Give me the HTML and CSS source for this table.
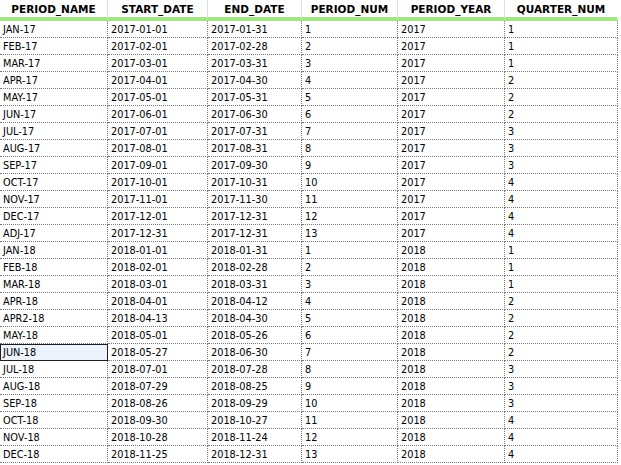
FILE: index.html
```html
<!DOCTYPE html>
<html>
<head>
<meta charset="utf-8">
<link rel="stylesheet" href="styles.css">
</head>
<body>
<table class="grid">
  <colgroup>
    <col class="c1"><col class="c2"><col class="c3"><col class="c4"><col class="c5"><col class="c6">
  </colgroup>
  <thead>
    <tr>
      <th>PERIOD_NAME</th><th>START_DATE</th><th>END_DATE</th><th>PERIOD_NUM</th><th>PERIOD_YEAR</th><th>QUARTER_NUM</th>
    </tr>
  </thead>
  <tbody>
    <tr><td>JAN-17</td><td>2017-01-01</td><td>2017-01-31</td><td>1</td><td>2017</td><td>1</td></tr>
    <tr><td>FEB-17</td><td>2017-02-01</td><td>2017-02-28</td><td>2</td><td>2017</td><td>1</td></tr>
    <tr><td>MAR-17</td><td>2017-03-01</td><td>2017-03-31</td><td>3</td><td>2017</td><td>1</td></tr>
    <tr><td>APR-17</td><td>2017-04-01</td><td>2017-04-30</td><td>4</td><td>2017</td><td>2</td></tr>
    <tr><td>MAY-17</td><td>2017-05-01</td><td>2017-05-31</td><td>5</td><td>2017</td><td>2</td></tr>
    <tr><td>JUN-17</td><td>2017-06-01</td><td>2017-06-30</td><td>6</td><td>2017</td><td>2</td></tr>
    <tr><td>JUL-17</td><td>2017-07-01</td><td>2017-07-31</td><td>7</td><td>2017</td><td>3</td></tr>
    <tr><td>AUG-17</td><td>2017-08-01</td><td>2017-08-31</td><td>8</td><td>2017</td><td>3</td></tr>
    <tr><td>SEP-17</td><td>2017-09-01</td><td>2017-09-30</td><td>9</td><td>2017</td><td>3</td></tr>
    <tr><td>OCT-17</td><td>2017-10-01</td><td>2017-10-31</td><td>10</td><td>2017</td><td>4</td></tr>
    <tr><td>NOV-17</td><td>2017-11-01</td><td>2017-11-30</td><td>11</td><td>2017</td><td>4</td></tr>
    <tr><td>DEC-17</td><td>2017-12-01</td><td>2017-12-31</td><td>12</td><td>2017</td><td>4</td></tr>
    <tr><td>ADJ-17</td><td>2017-12-31</td><td>2017-12-31</td><td>13</td><td>2017</td><td>4</td></tr>
    <tr><td>JAN-18</td><td>2018-01-01</td><td>2018-01-31</td><td>1</td><td>2018</td><td>1</td></tr>
    <tr><td>FEB-18</td><td>2018-02-01</td><td>2018-02-28</td><td>2</td><td>2018</td><td>1</td></tr>
    <tr><td>MAR-18</td><td>2018-03-01</td><td>2018-03-31</td><td>3</td><td>2018</td><td>1</td></tr>
    <tr><td>APR-18</td><td>2018-04-01</td><td>2018-04-12</td><td>4</td><td>2018</td><td>2</td></tr>
    <tr><td>APR2-18</td><td>2018-04-13</td><td>2018-04-30</td><td>5</td><td>2018</td><td>2</td></tr>
    <tr><td>MAY-18</td><td>2018-05-01</td><td>2018-05-26</td><td>6</td><td>2018</td><td>2</td></tr>
    <tr><td class="selected">JUN-18</td><td>2018-05-27</td><td>2018-06-30</td><td>7</td><td>2018</td><td>2</td></tr>
    <tr><td>JUL-18</td><td>2018-07-01</td><td>2018-07-28</td><td>8</td><td>2018</td><td>3</td></tr>
    <tr><td>AUG-18</td><td>2018-07-29</td><td>2018-08-25</td><td>9</td><td>2018</td><td>3</td></tr>
    <tr><td>SEP-18</td><td>2018-08-26</td><td>2018-09-29</td><td>10</td><td>2018</td><td>3</td></tr>
    <tr><td>OCT-18</td><td>2018-09-30</td><td>2018-10-27</td><td>11</td><td>2018</td><td>4</td></tr>
    <tr><td>NOV-18</td><td>2018-10-28</td><td>2018-11-24</td><td>12</td><td>2018</td><td>4</td></tr>
    <tr><td>DEC-18</td><td>2018-11-25</td><td>2018-12-31</td><td>13</td><td>2018</td><td>4</td></tr>
  </tbody>
</table>
</body>
</html>
```

FILE: styles.css
```css
html, body {
  margin: 0;
  padding: 0;
  background: #ffffff;
}

.grid {
  border-collapse: separate;
  border-spacing: 0;
  table-layout: fixed;
  width: 618px;
  font-family: "DejaVu Sans", Verdana, sans-serif;
  color: #000000;
}

.c1 { width: 108px; }
.c2 { width: 100px; }
.c3 { width: 94px; }
.c4 { width: 96px; }
.c5 { width: 107px; }
.c6 { width: 113px; }

.grid th {
  height: 21px;
  padding: 1px 0 0 0;
  box-sizing: border-box;
  font-size: 10.5px;
  line-height: 16px;
  font-weight: bold;
  text-align: center;
  vertical-align: middle;
  border-right: 1px solid #dedede;
  border-bottom: 4px solid #a3e584;
  white-space: nowrap;
}

.grid th:last-child {
  border-right-color: #ffffff;
}

.grid td {
  height: 17px;
  padding: 1px 0 0 3px;
  box-sizing: border-box;
  font-size: 9.75px;
  line-height: 15px;
  text-align: left;
  vertical-align: middle;
  border-right: 1px dotted #7a7a7a;
  border-bottom: 1px dotted #7a7a7a;
  white-space: nowrap;
  overflow: hidden;
}

.grid td.selected {
  background: #ecf3fc;
  outline: 1px solid #1e1e1e;
  outline-offset: -1px;
}
```
